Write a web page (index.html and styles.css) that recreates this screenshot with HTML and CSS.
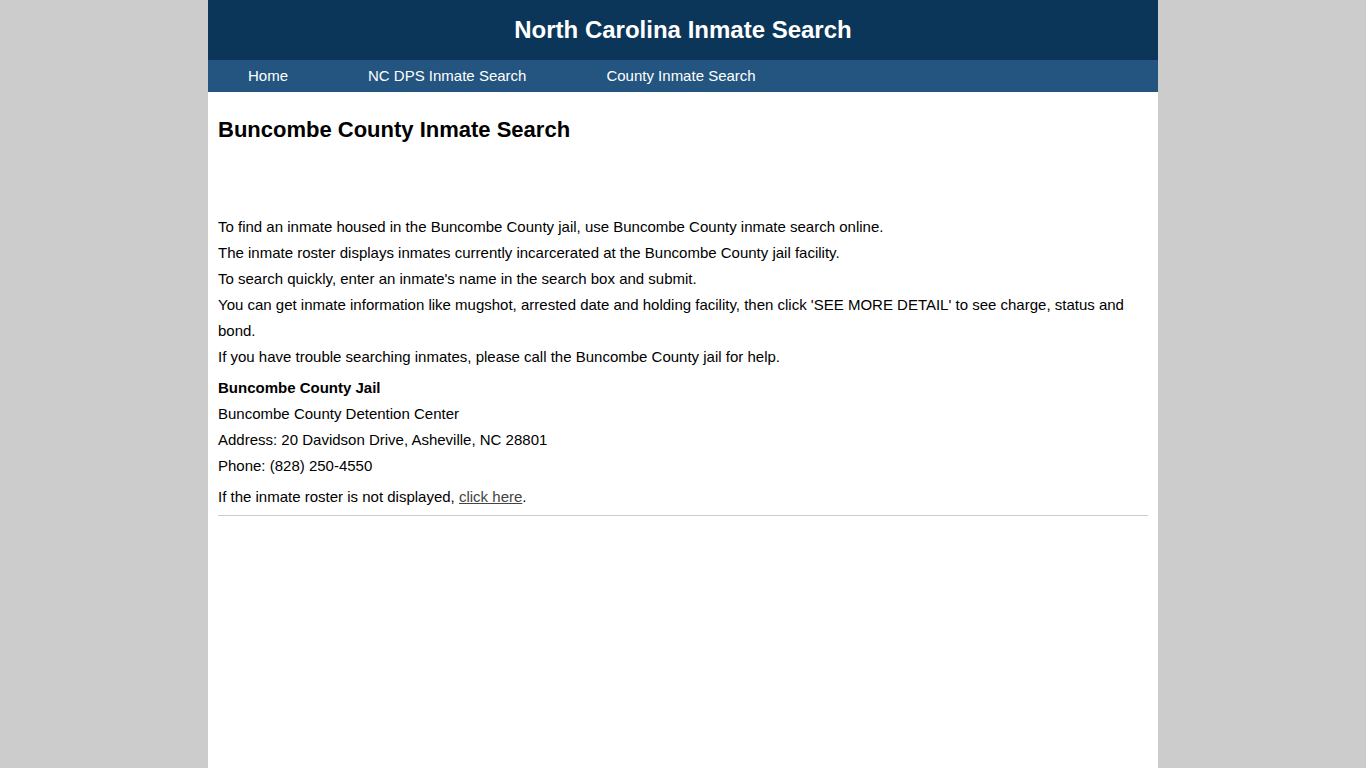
FILE: index.html
```html
<!DOCTYPE html>
<html>
<head>
<meta charset="utf-8">
<title>Buncombe County Inmate Search</title>
<link rel="stylesheet" href="styles.css">
</head>
<body>
<div class="page">
  <header class="site-header">North Carolina Inmate Search</header>
  <nav class="site-nav">
    <a href="#">Home</a>
    <a href="#">NC DPS Inmate Search</a>
    <a href="#">County Inmate Search</a>
  </nav>
  <main class="content">
    <h1 class="title">Buncombe County Inmate Search</h1>
    <div class="intro">
      <p>To find an inmate housed in the Buncombe County jail, use Buncombe County inmate search online.</p>
      <p>The inmate roster displays inmates currently incarcerated at the Buncombe County jail facility.</p>
      <p>To search quickly, enter an inmate's name in the search box and submit.</p>
      <p>You can get inmate information like mugshot, arrested date and holding facility, then click 'SEE MORE DETAIL' to see charge, status and bond.</p>
      <p>If you have trouble searching inmates, please call the Buncombe County jail for help.</p>
    </div>
    <div class="jail">
      <p class="jail-name">Buncombe County Jail</p>
      <p>Buncombe County Detention Center</p>
      <p>Address: 20 Davidson Drive, Asheville, NC 28801</p>
      <p>Phone: (828) 250-4550</p>
    </div>
    <p class="roster">If the inmate roster is not displayed, <a href="#">click here</a>.</p>
    <hr class="rule">
  </main>
</div>
</body>
</html>
```
FILE: styles.css
```css
html, body {
  margin: 0;
  padding: 0;
}
body {
  background: #cccccc;
  font-family: "Liberation Sans", Arial, sans-serif;
  color: #000000;
}
.page {
  width: 950px;
  margin: 0 auto;
  background: #ffffff;
  min-height: 768px;
}
.site-header {
  height: 60px;
  line-height: 60px;
  background: #0c3659;
  color: #ffffff;
  text-align: center;
  font-size: 24px;
  font-weight: bold;
}
.site-nav {
  height: 32px;
  display: flex;
  align-items: center;
  background: #235580;
}
.site-nav a {
  color: #ffffff;
  text-decoration: none;
  font-size: 15px;
  padding: 0 40px;
  line-height: 32px;
}
.content {
  padding: 0 10px;
}
.title {
  margin: 25px 0 0;
  font-size: 22px;
  line-height: 26px;
  font-weight: bold;
  color: #000000;
}
.intro {
  margin-top: 71px;
}
.content p {
  margin: 0;
  font-size: 15px;
  line-height: 26px;
}
.jail {
  margin-top: 5px;
}
.jail-name {
  font-weight: bold;
}
.content p.roster {
  margin-top: 5px;
}
.roster a {
  color: #444444;
  text-decoration: underline;
}
.rule {
  margin: 5px 0 0;
  border: 0;
  border-top: 1px solid #cccccc;
  height: 0;
}
```
